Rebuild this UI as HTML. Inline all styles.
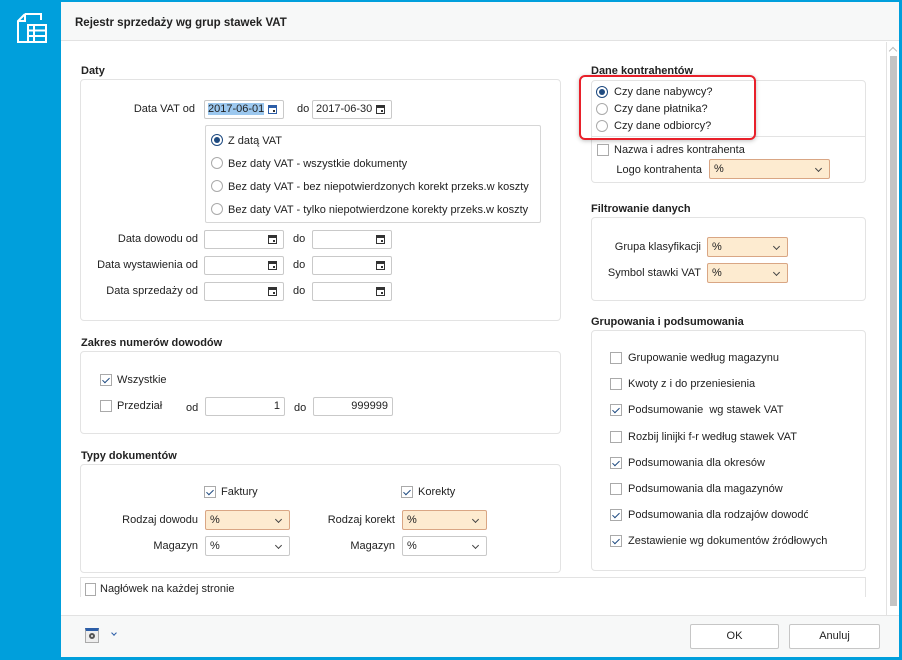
<!DOCTYPE html>
<html><head><meta charset="utf-8"><style>
*{box-sizing:border-box;margin:0;padding:0}
body{width:902px;height:660px;background:#009fdc;position:relative;overflow:hidden;font-family:"Liberation Sans",sans-serif;font-size:11px;color:#222}
.a{position:absolute;white-space:nowrap}
.win{position:absolute;left:61px;top:2px;width:838px;height:655px;background:#fff}
.box{position:absolute;border:1px solid #e3e3e3;border-radius:4px;background:#fff}
.lbl{position:absolute;font-weight:bold;font-size:11px;white-space:nowrap;line-height:16px}
.t{position:absolute;white-space:nowrap;line-height:16px}
.r{text-align:right}
.in{position:absolute;border:1px solid #c9c9c9;border-radius:2px;height:19px;background:#fff;line-height:17px;padding-left:3px;font-size:11px}
.cal{position:absolute;right:6px;top:4px;width:9px;height:9px;border:1.5px solid #333;border-top-width:3px}
.cal:after{content:"";position:absolute;right:1px;bottom:1px;width:2px;height:2px;background:#333}
.sel{position:absolute;border:1px solid #c9c9c9;border-radius:2px;height:20px;background:#fff;line-height:18px;padding-left:4px;font-size:11px}
.sel.b{background:#fdebd0;border-color:#d9a684}
.sel:after{content:"";position:absolute;right:8px;top:6px;width:4px;height:4px;border-right:1px solid #444;border-bottom:1px solid #444;transform:rotate(45deg)}
.rd{position:absolute;width:12px;height:12px;border:1px solid #aaa;border-radius:50%;background:#fff}
.rd.on{border-color:#1e4a80}
.rd.on:after{content:"";position:absolute;left:2px;top:2px;width:6px;height:6px;border-radius:50%;background:#1e4a80}
.cb{position:absolute;width:12px;height:12px;border:1px solid #aaa;background:#fff}
.cb.on:after{content:"";position:absolute;left:3px;top:1px;width:3px;height:6px;border-right:1.5px solid #1e4a80;border-bottom:1.5px solid #1e4a80;transform:rotate(45deg)}
.btn{position:absolute;border:1px solid #c6c6c6;border-radius:2px;background:#fff;text-align:center;line-height:23px;font-size:11px}
</style></head><body>
<!-- app icon -->
<svg class="a" style="left:15px;top:11px" width="34" height="34" viewBox="0 0 34 34" fill="none" stroke="#fff" stroke-width="2">
<path d="M10 3h16v6"/><path d="M10 3L3 10v21h10"/><path d="M3 10h7V3"/>
<rect x="13" y="14" width="18" height="17"/><path d="M13 19.5h18M13 25h18M19 14v17"/>
</svg>
<div class="win">
  <div class="a" style="left:0;top:0;width:838px;height:39px;background:#f7f8f8;border-bottom:1px solid #e2e2e2"></div>
  <div class="a" style="left:14px;top:15px;font-weight:bold;font-size:11.5px">Rejestr sprzedaży wg grup stawek VAT</div>
  <div class="a" style="left:825px;top:40px;width:1px;height:573px;background:#e2e2e2"></div>
  <div class="a" style="left:829px;top:46px;width:6px;height:6px;border-left:1px solid #bbb;border-top:1px solid #bbb;transform:rotate(45deg)"></div>
  <div class="a" style="left:829px;top:54px;width:7px;height:550px;background:#c4c4c4"></div>
  <div class="a" style="left:0;top:613px;width:838px;height:42px;background:#f7f8f8;border-top:1px solid #e2e2e2"></div>
</div>
<div class="a" style="left:85px;top:628px;width:14px;height:15px;border:1px solid #aaa;border-top:3px solid #2c5ea8;background:#eee"></div>
<div class="a" style="left:89px;top:633px;width:6px;height:6px;border-radius:50%;border:2px solid #555"></div>
<div class="a" style="left:112px;top:631px;width:4px;height:4px;border-right:1px solid #2c5ea8;border-bottom:1px solid #2c5ea8;transform:rotate(45deg)"></div>
<div class="btn" style="left:690px;top:624px;width:89px;height:25px">OK</div>
<div class="btn" style="left:789px;top:624px;width:91px;height:25px">Anuluj</div>

<div class="lbl" style="left:81px;top:63px">Daty</div>
<div class="box" style="left:80px;top:79px;width:481px;height:242px"></div>
<div class="t r" style="left:100px;top:101px;width:95px">Data VAT od</div>
<div class="in" style="left:204px;top:100px;width:80px"><span style="background:#9cc8ef">2017-06-01</span><div class="cal" style="border-color:#2c5ea8"></div></div>
<div class="t" style="left:297px;top:101px">do</div>
<div class="in" style="left:312px;top:100px;width:80px">2017-06-30<div class="cal"></div></div>
<div class="box" style="left:205px;top:125px;width:336px;height:98px;border-radius:2px;border-color:#d6d6d6"></div>
<div class="rd on" style="left:211px;top:134px"></div><div class="t" style="left:228px;top:133px">Z datą VAT</div>
<div class="rd" style="left:211px;top:157px"></div><div class="t" style="left:228px;top:156px">Bez daty VAT - wszystkie dokumenty</div>
<div class="rd" style="left:211px;top:180px"></div><div class="t" style="left:228px;top:179px">Bez daty VAT - bez niepotwierdzonych korekt przeks.w koszty</div>
<div class="rd" style="left:211px;top:203px"></div><div class="t" style="left:228px;top:202px">Bez daty VAT - tylko niepotwierdzone korekty przeks.w koszty</div>
<div class="t r" style="left:60px;top:231px;width:138px">Data dowodu od</div>
<div class="in" style="left:204px;top:230px;width:80px"><div class="cal"></div></div><div class="t" style="left:293px;top:231px">do</div><div class="in" style="left:312px;top:230px;width:80px"><div class="cal"></div></div>
<div class="t r" style="left:60px;top:257px;width:138px">Data wystawienia od</div>
<div class="in" style="left:204px;top:256px;width:80px"><div class="cal"></div></div><div class="t" style="left:293px;top:257px">do</div><div class="in" style="left:312px;top:256px;width:80px"><div class="cal"></div></div>
<div class="t r" style="left:60px;top:283px;width:138px">Data sprzedaży od</div>
<div class="in" style="left:204px;top:282px;width:80px"><div class="cal"></div></div><div class="t" style="left:293px;top:283px">do</div><div class="in" style="left:312px;top:282px;width:80px"><div class="cal"></div></div>

<div class="lbl" style="left:81px;top:335px">Zakres numerów dowodów</div>
<div class="box" style="left:80px;top:351px;width:481px;height:83px"></div>
<div class="cb on" style="left:100px;top:374px"></div><div class="t" style="left:117px;top:372px">Wszystkie</div>
<div class="cb" style="left:100px;top:400px"></div><div class="t" style="left:117px;top:398px">Przedział</div>
<div class="t" style="left:186px;top:400px">od</div>
<div class="in r" style="left:205px;top:397px;width:80px;padding-right:4px">1</div>
<div class="t" style="left:294px;top:400px">do</div>
<div class="in r" style="left:313px;top:397px;width:80px;padding-right:4px">999999</div>

<div class="lbl" style="left:81px;top:448px">Typy dokumentów</div>
<div class="box" style="left:80px;top:464px;width:481px;height:109px"></div>
<div class="cb on" style="left:204px;top:486px"></div><div class="t" style="left:221px;top:484px">Faktury</div>
<div class="cb on" style="left:401px;top:486px"></div><div class="t" style="left:418px;top:484px">Korekty</div>
<div class="t r" style="left:80px;top:512px;width:118px">Rodzaj dowodu</div>
<div class="sel b" style="left:205px;top:510px;width:85px">%</div>
<div class="t r" style="left:280px;top:512px;width:115px">Rodzaj korekt</div>
<div class="sel b" style="left:402px;top:510px;width:85px">%</div>
<div class="t r" style="left:80px;top:538px;width:118px">Magazyn</div>
<div class="sel" style="left:205px;top:536px;width:85px">%</div>
<div class="t r" style="left:280px;top:538px;width:115px">Magazyn</div>
<div class="sel" style="left:402px;top:536px;width:85px">%</div>

<div class="a" style="left:80px;top:577px;width:786px;height:20px;border:1px solid #e3e3e3;border-bottom:none;background:#fff"></div>
<div class="cb" style="left:85px;top:583px;width:11px;height:13px"></div>
<div class="t" style="left:100px;top:581px">Nagłówek na każdej stronie</div>

<div class="lbl" style="left:591px;top:63px">Dane kontrahentów</div>
<div class="box" style="left:591px;top:80px;width:275px;height:103px"></div>
<div class="a" style="left:591px;top:136px;width:275px;height:1px;background:#e3e3e3"></div>
<div class="rd on" style="left:596px;top:86px"></div><div class="t" style="left:614px;top:84px">Czy dane nabywcy?</div>
<div class="rd" style="left:596px;top:103px"></div><div class="t" style="left:614px;top:101px">Czy dane płatnika?</div>
<div class="rd" style="left:596px;top:120px"></div><div class="t" style="left:614px;top:118px">Czy dane odbiorcy?</div>
<div class="a" style="left:579px;top:75px;width:177px;height:65px;border:2px solid #e8202a;border-radius:6px;box-shadow:0 1px 4px rgba(0,0,0,.25)"></div>
<div class="cb" style="left:597px;top:144px"></div><div class="t" style="left:614px;top:142px">Nazwa i adres kontrahenta</div>
<div class="t r" style="left:600px;top:162px;width:102px">Logo kontrahenta</div>
<div class="sel b" style="left:709px;top:159px;width:121px">%</div>

<div class="lbl" style="left:591px;top:201px">Filtrowanie danych</div>
<div class="box" style="left:591px;top:217px;width:275px;height:84px"></div>
<div class="t r" style="left:596px;top:239px;width:105px">Grupa klasyfikacji</div>
<div class="sel b" style="left:707px;top:237px;width:81px">%</div>
<div class="t r" style="left:596px;top:265px;width:105px">Symbol stawki VAT</div>
<div class="sel b" style="left:707px;top:263px;width:81px">%</div>

<div class="lbl" style="left:591px;top:314px">Grupowania i podsumowania</div>
<div class="box" style="left:591px;top:330px;width:275px;height:241px"></div>
<div class="cb" style="left:610px;top:352px"></div><div class="t" style="left:628px;top:350px">Grupowanie według magazynu</div>
<div class="cb" style="left:610px;top:378px"></div><div class="t" style="left:628px;top:376px">Kwoty z i do przeniesienia</div>
<div class="cb on" style="left:610px;top:404px"></div><div class="t" style="left:628px;top:402px">Podsumowanie&nbsp; wg stawek VAT</div>
<div class="cb" style="left:610px;top:431px"></div><div class="t" style="left:628px;top:429px">Rozbij linijki f-r według stawek VAT</div>
<div class="cb on" style="left:610px;top:457px"></div><div class="t" style="left:628px;top:455px">Podsumowania dla okresów</div>
<div class="cb" style="left:610px;top:483px"></div><div class="t" style="left:628px;top:481px">Podsumowania dla magazynów</div>
<div class="cb on" style="left:610px;top:509px"></div><div class="t" style="left:628px;top:507px;width:180px;overflow:hidden">Podsumowania dla rodzajów dowodów</div>
<div class="cb on" style="left:610px;top:535px"></div><div class="t" style="left:628px;top:533px">Zestawienie wg dokumentów źródłowych</div>
</body></html>
